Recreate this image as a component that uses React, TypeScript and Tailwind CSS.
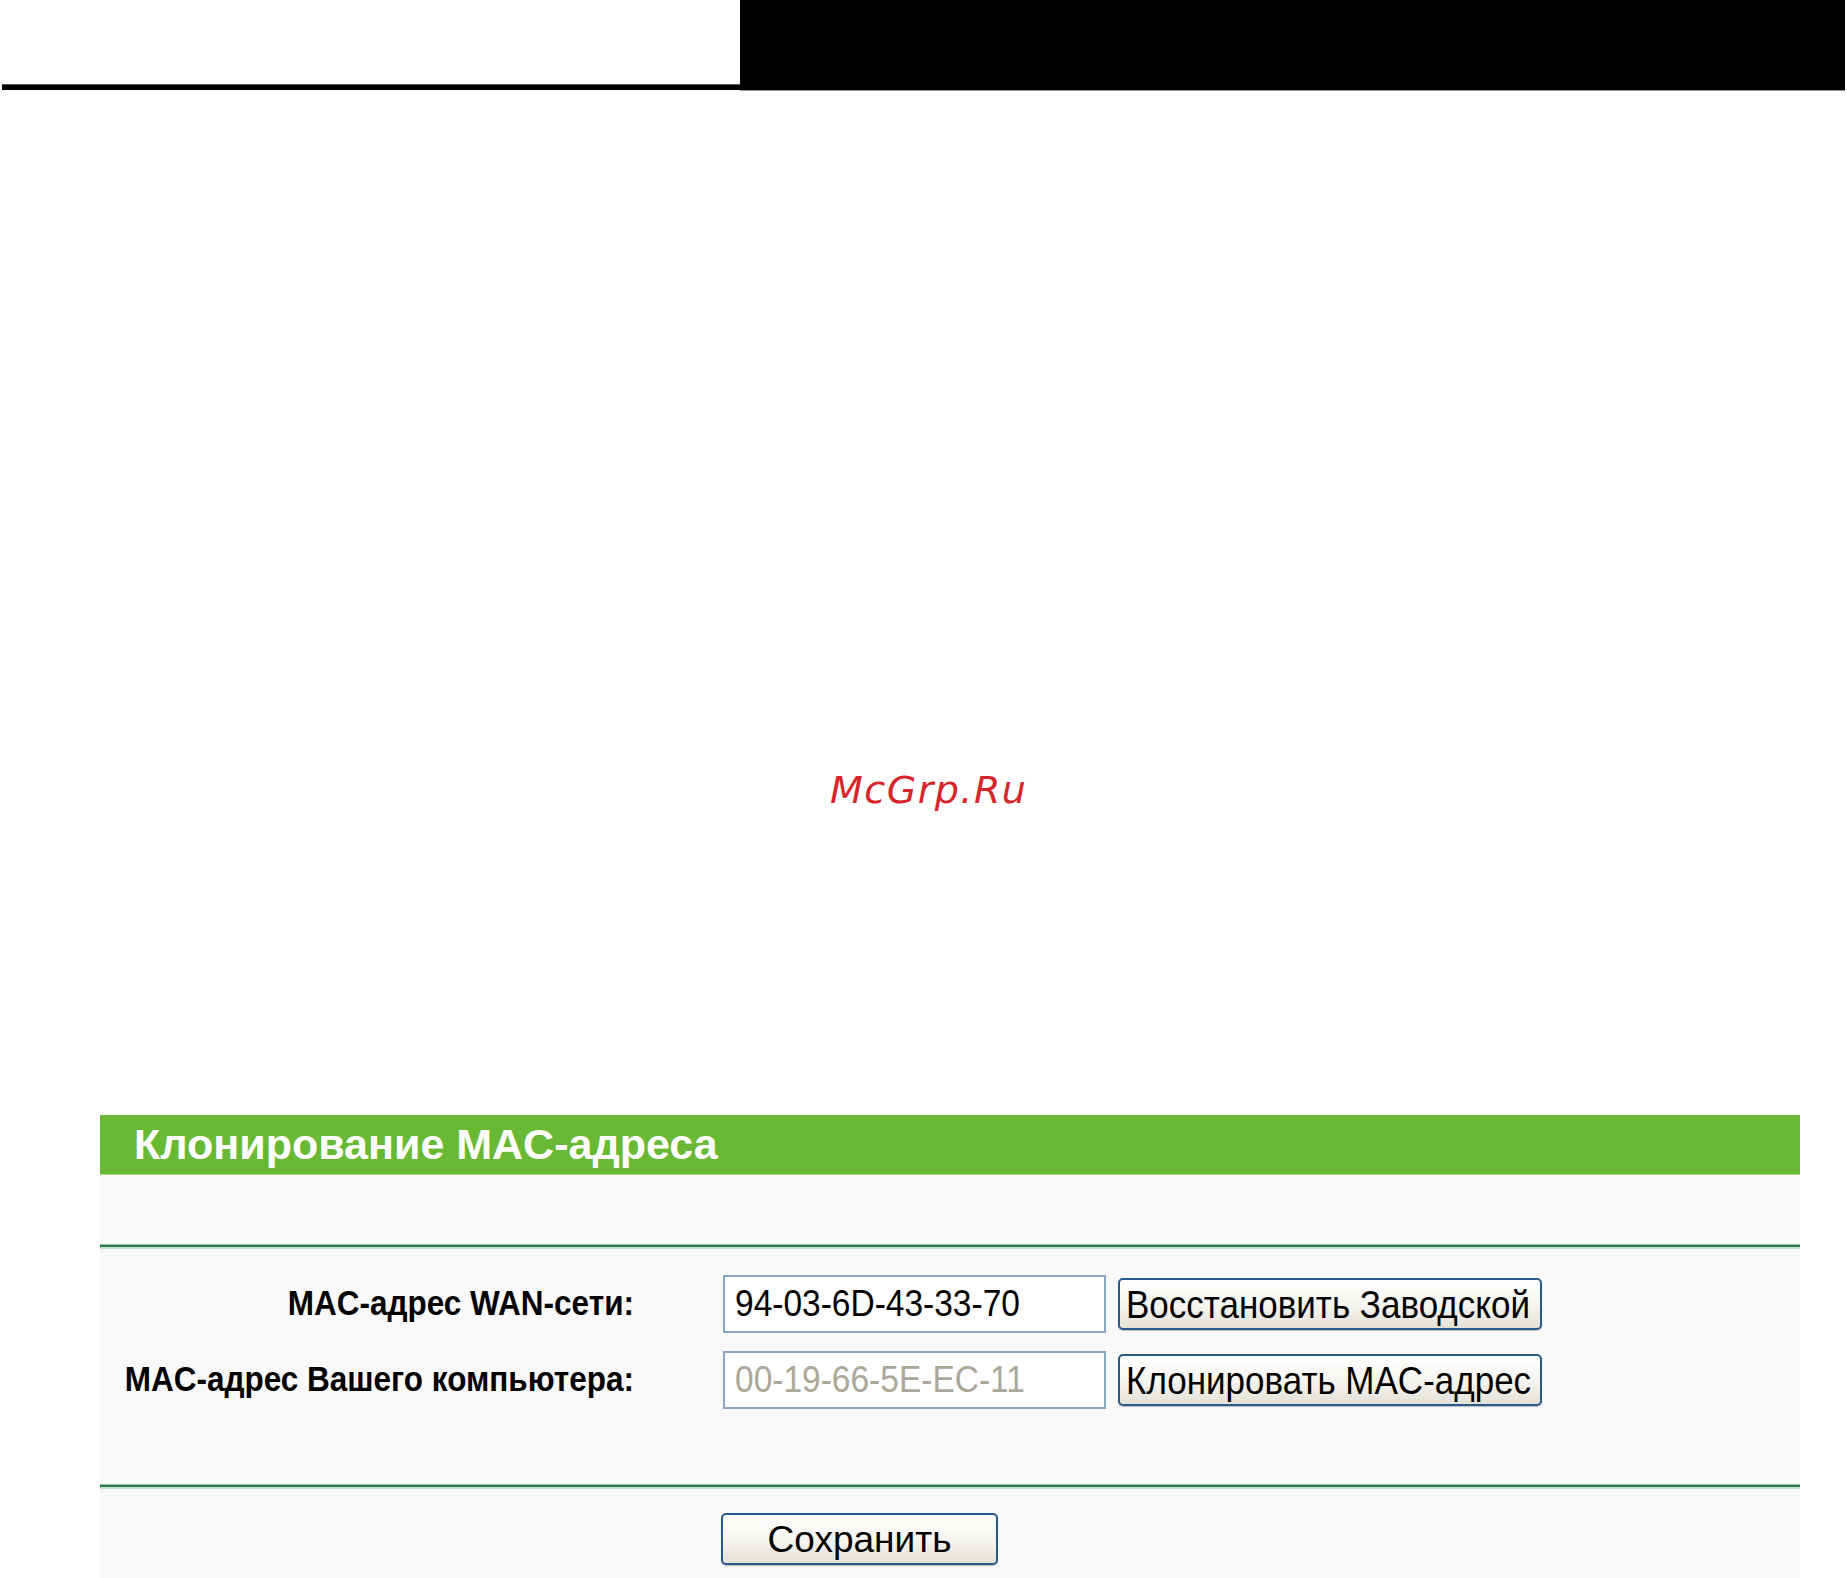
export default function App() {
  const btn =
    "h-[52px] rounded-[5px] border-2 border-[#2a5a8c] bg-gradient-to-b from-[#ffffff] via-[#f6f5f0] to-[#e4e1d6] text-black text-[35px] leading-none flex items-center shadow-[0_1px_1px_rgba(0,0,0,0.25)]";
  const field =
    "w-[383px] h-[58px] border-2 border-[#8aa6c4] bg-white flex items-center pl-[10px] text-[33.5px] leading-none";
  return (
    <div className="w-[1847px] h-[1578px] bg-white overflow-hidden flex flex-col font-['Liberation_Sans',Arial,sans-serif]">
      {/* top bar */}
      <div className="flex h-[91px] shrink-0">
        <div className="w-[740px] flex flex-col justify-end pl-[2px] pb-[1px]">
          <div className="h-[1px] bg-[#555555]" />
          <div className="h-[5px] bg-black" />
        </div>
        <div className="w-[1105px] bg-black border-b border-[#9a9a9a]" />
      </div>

      {/* watermark */}
      <div className="mt-[680px] pl-[830px] h-[38px] shrink-0">
        <span className="font-['DejaVu_Sans',sans-serif] italic text-[38px] leading-[38px] tracking-[1.5px] text-[#d6262c]">
          McGrp.Ru
        </span>
      </div>

      {/* panel */}
      <div className="mt-[306px] ml-[100px] w-[1700px] flex-1 flex flex-col bg-[#f9f9f9]">
        <div className="h-[60px] bg-[#69b934] flex items-center pl-[34px] border-b border-[#a6d882]">
          <span className="text-white font-bold text-[43px] leading-none">
            Клонирование MAC-адреса
          </span>
        </div>
        <div className="h-[69px]" />
        <div className="h-[5px] flex flex-col">
          <div className="h-[1px] bg-[#8fc0a0]" />
          <div className="h-[2px] bg-[#2a7a4c]" />
          <div className="h-[2px] bg-[#c4e0cc]" />
        </div>

        <div className="pt-[26px] pb-[75px] flex flex-col gap-[18px]">
          <div className="flex items-center">
            <div className="w-[534px] text-right font-bold text-[31.5px] leading-none text-black">
              <span className="inline-block scale-y-[1.1]">MAC-адрес WAN-сети:</span>
            </div>
            <div className={"ml-[89px] text-black " + field}>
              <span className="inline-block scale-y-[1.12]">94-03-6D-43-33-70</span>
            </div>
            <div className={"ml-[12px] w-[424px] pl-[6px] " + btn}>
              <span className="inline-block scale-y-[1.1]">Восстановить Заводской</span>
            </div>
          </div>
          <div className="flex items-center">
            <div className="w-[534px] text-right font-bold text-[31.5px] leading-none text-black">
              <span className="inline-block scale-y-[1.1]">MAC-адрес Вашего компьютера:</span>
            </div>
            <div className={"ml-[89px] text-[#aca899] " + field}>
              <span className="inline-block scale-y-[1.12]">00-19-66-5E-EC-11</span>
            </div>
            <div className={"ml-[12px] w-[424px] pl-[6px] " + btn}>
              <span className="inline-block scale-y-[1.1]">Клонировать MAC-адрес</span>
            </div>
          </div>
        </div>

        <div className="h-[5px] flex flex-col">
          <div className="h-[1px] bg-[#8fc0a0]" />
          <div className="h-[2px] bg-[#2a7a4c]" />
          <div className="h-[2px] bg-[#c4e0cc]" />
        </div>
        <div className="pt-[24px] pl-[621px]">
          <div className={"w-[277px] justify-center !text-[37px] " + btn}>
            <span className="inline-block">Сохранить</span>
          </div>
        </div>
      </div>
    </div>
  );
}
